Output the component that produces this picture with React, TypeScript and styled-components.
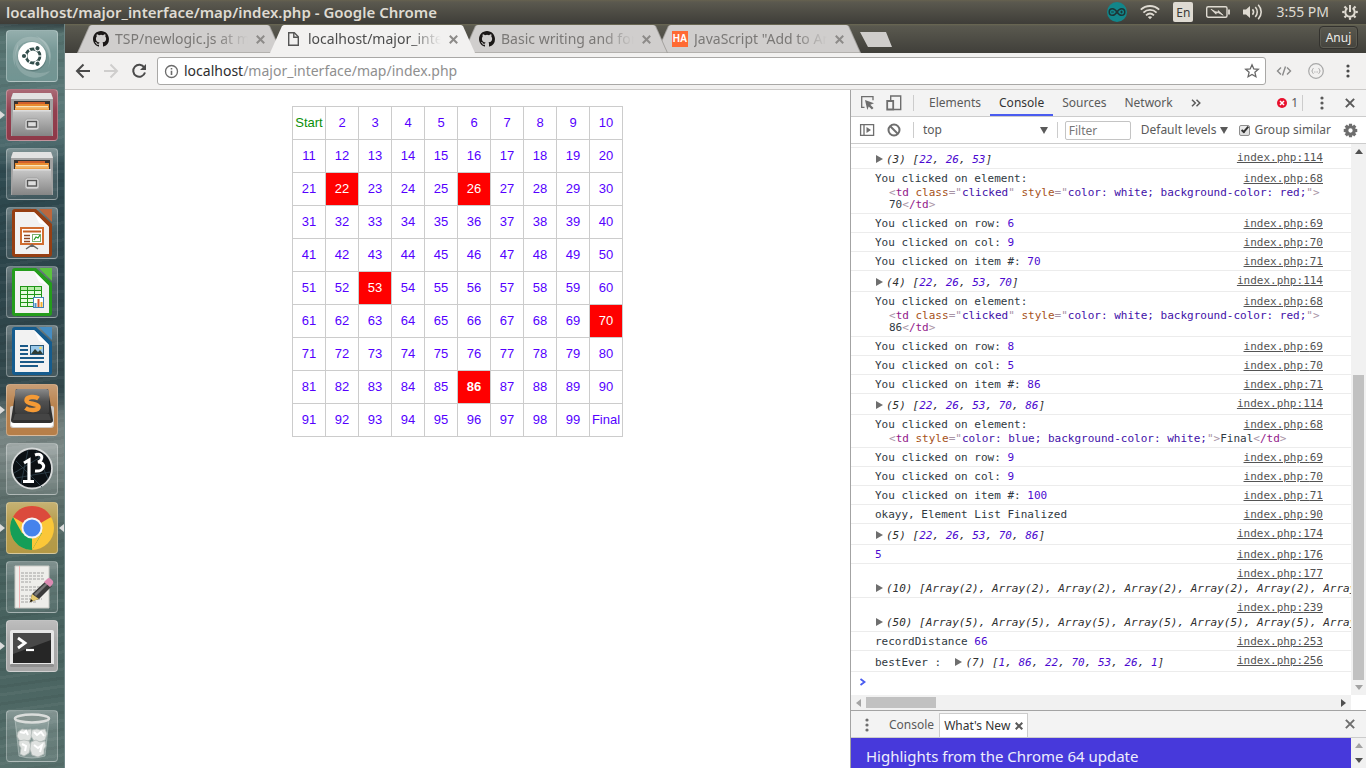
import React from "react";
import styled, { createGlobalStyle, css } from "styled-components";

const UI = `"Noto Sans", "Open Sans", sans-serif`;
const MONO = `"DejaVu Sans Mono", "Liberation Mono", monospace`;
const ARIAL = `"Liberation Sans", Arial, sans-serif`;

const Global = createGlobalStyle`
  *, *::before, *::after { box-sizing: border-box; }
  body { margin: 0; background: #fff; font-family: ${UI}; }
  button, input, select { font: inherit; color: inherit; margin: 0; padding: 0; border: 0; background: none; }
  svg { display: block; flex: none; }
`;

/* ---------- desktop ---------- */

const Desktop = styled.div`
  height: 100vh;
  display: flex;
  flex-direction: column;
  overflow: hidden;
`;

const TopPanel = styled.header`
  flex: none;
  height: 24px;
  display: flex;
  align-items: center;
  justify-content: space-between;
  padding: 0 8px 0 6px;
  color: #dfdbd2;
  background: linear-gradient(#66624f 0, #5b594f 2px, #3e3d38 100%);
`;

const WindowTitle = styled.h1`
  margin: 0;
  font-size: 15px;
  line-height: 22px;
  font-weight: 600;
`;

const Indicators = styled.div`
  display: flex;
  align-items: center;
  gap: 13px;
  font-size: 14px;
  line-height: 22px;
`;

const LanguageBadge = styled.span`
  width: 20px;
  height: 20px;
  border-radius: 2px;
  background: #dfdbd2;
  color: #3c3b37;
  font-size: 12px;
  line-height: 21px;
  text-align: center;
`;

const Workspace = styled.div`
  flex: 1;
  min-height: 0;
  display: flex;
`;

const Launcher = styled.nav`
  flex: none;
  width: 65px;
  display: flex;
  flex-direction: column;
  gap: 7px;
  padding: 6px 7px 6px 6px;
  border-right: 1px solid #6f8787;
  background:
    repeating-linear-gradient(172deg, rgba(255, 255, 255, 0.04) 0 3px, transparent 3px 9px, rgba(0, 0, 0, 0.05) 9px 12px, transparent 12px 17px),
    linear-gradient(#38484a 0, #55726f 10px, #5a7878 90px, #4b686b 122px, #2f4a50 145px, #2c444a 250px, #34494d 370px, #6f7d7b 395px, #7b8886 430px, #5f706d 470px, #46605d 540px, #4a6461 650px, #57706c 100%);
`;

const Tile = styled.button<{ $tone?: string; $last?: boolean }>`
  position: relative;
  flex: none;
  width: 52px;
  height: 52px;
  border-radius: 4px;
  border: 1px solid rgba(255, 255, 255, 0.3);
  background:
    linear-gradient(rgba(255, 255, 255, 0.26), rgba(255, 255, 255, 0.06) 40%, rgba(255, 255, 255, 0.02)),
    ${(p) => p.$tone ?? "rgba(255, 255, 255, 0.08)"};
  ${(p) => p.$last && css`margin-top: auto;`}
  svg { margin: -1px; }
`;

const Pip = styled.span<{ $side: "left" | "right" }>`
  position: absolute;
  top: 21px;
  ${(p) => p.$side}: -7px;
  border: 4px solid transparent;
  border-${(p) => p.$side}: 5px solid #dcdcdc;
  border-${(p) => (p.$side === "left" ? "right" : "left")}: 0;
`;

/* ---------- browser frame ---------- */

const Browser = styled.div`
  flex: 1;
  min-width: 0;
  display: flex;
  flex-direction: column;
`;

const TabStrip = styled.div`
  flex: none;
  height: 29px;
  display: flex;
  align-items: flex-end;
  padding: 0 8px 0 12px;
  background: linear-gradient(#6b6852 0, #5a594f 2px, #403f3a 100%);
`;

const TabBox = styled.div<{ $active?: boolean; $level: number }>`
  position: relative;
  z-index: ${(p) => p.$level};
  width: 205px;
  height: 28px;
  margin-right: -12px;
  padding: 0 14px 0 16px;
  display: flex;
  align-items: center;
  color: ${(p) => (p.$active ? "#4c4c4c" : "#7a7876")};
  &::before, &::after {
    content: "";
    position: absolute;
    z-index: -1;
    inset: 0;
    clip-path: polygon(0 100%, 12px 1px, 14px 0, 191px 0, 193px 1px, 100% 100%);
    background: ${(p) => (p.$active ? "#f2f1f0" : "#a3a19e")};
  }
  &::after {
    inset: 0 1px;
    clip-path: polygon(0 100%, 12px 1px, 14px 0, 189px 0, 191px 1px, 100% 100%);
    background: ${(p) => (p.$active ? "#f2f1f0" : "linear-gradient(#d0cecd 27px, #b3b1ae 27px)")};
  }
`;

const TabIcon = styled.span`
  width: 22px;
  flex: none;
`;

const TabLabel = styled.button`
  flex: 1;
  min-width: 0;
  overflow: hidden;
  white-space: nowrap;
  text-align: left;
  font-size: 14px;
  line-height: 22px;
  mask-image: linear-gradient(90deg, #000 74%, transparent 97%);
`;

const IconButton = styled.button<{ $w?: number }>`
  width: ${(p) => p.$w ?? 16}px;
  flex: none;
  display: flex;
  align-items: center;
  justify-content: center;
`;

const NewTab = styled.button`
  width: 32px;
  height: 15px;
  margin: 0 0 6px 11px;
  background: #cfcdcb;
  clip-path: polygon(0 0, 26px 0, 100% 100%, 8px 100%);
`;

const ProfileButton = styled.button`
  align-self: flex-start;
  margin: 2px 0 0 auto;
  width: 39px;
  height: 23px;
  border: 1px solid #33322e;
  border-radius: 4px;
  color: #eeece8;
  font-size: 12px;
  line-height: 20px;
  box-shadow: inset 0 0 0 1px #5d5c53;
`;

const AddressRow = styled.div`
  flex: none;
  height: 37px;
  display: flex;
  align-items: center;
  padding: 0 10px;
  background: #f2f1f0;
  border-bottom: 1px solid #cbc9c7;
`;

const NavGroup = styled.div`
  display: flex;
  gap: 12px;
  width: 82px;
`;

const Omnibox = styled.div`
  flex: 1;
  height: 28px;
  display: flex;
  align-items: center;
  padding: 0 5px 0 6px;
  gap: 5px;
  background: #fff;
  border: 1px solid #a9a8a6;
  border-radius: 3px;
`;

const Address = styled.a`
  flex: 1;
  font-size: 14px;
  line-height: 22px;
  color: #8f8f8f;
  text-decoration: none;
  b { font-weight: 400; color: #2e2e2e; }
`;

const Extensions = styled.div`
  display: flex;
  gap: 16px;
  padding-left: 10px;
`;

const Content = styled.div`
  flex: 1;
  min-height: 0;
  display: flex;
`;

/* ---------- web page ---------- */

const Page = styled.main`
  flex: 1;
  min-width: 0;
  padding-top: 16px;
  overflow: hidden;
`;

const Grid = styled.table`
  margin: 0 auto;
  border-collapse: collapse;
  table-layout: fixed;
  width: 331px;
  font: 13px/15px ${ARIAL};
  text-align: center;
`;

const Cell = styled.td<{ $hit?: boolean; $bold?: boolean; $start?: boolean }>`
  height: 33px;
  padding: 0 0 2px;
  border: 1px solid #ccc;
  white-space: nowrap;
  color: ${(p) => (p.$hit ? "#fff" : p.$start ? "#0a8f0a" : "#5500ff")};
  background: ${(p) => (p.$hit ? "#f00" : "#fff")};
  font-weight: ${(p) => (p.$bold ? 700 : 400)};
`;

/* ---------- developer tools ---------- */

const DevTools = styled.aside`
  flex: none;
  width: 516px;
  display: flex;
  flex-direction: column;
  border-left: 1px solid #a3a3a3;
  color: #5a5a5a;
  font-size: 12px;
  line-height: 16px;
  background: #fff;
`;

const Bar = styled.div<{ $plain?: boolean }>`
  flex: none;
  height: 27px;
  display: flex;
  align-items: center;
  background: ${(p) => (p.$plain ? "#fff" : "#f3f3f3")};
  border-bottom: 1px solid #ccc;
`;

const Divider = styled.span`
  width: 1px;
  height: 16px;
  flex: none;
  background: #ccc;
`;

const IconPair = styled.div`
  display: flex;
  align-items: center;
  gap: 11px;
  width: 62px;
  padding-left: 8px;
`;

const PanelTabs = styled.div`
  flex: 1;
  display: flex;
  align-items: stretch;
  height: 26px;
  padding-left: 6px;
`;

const PanelTab = styled.button<{ $on?: boolean }>`
  padding: 0 9px;
  color: ${(p) => (p.$on ? "#333" : "#5a5a5a")};
  box-shadow: ${(p) => (p.$on ? "inset 0 -2px #4a5cf0" : "none")};
`;

const ErrorCount = styled.button`
  display: flex;
  align-items: center;
  gap: 4px;
  padding-right: 4px;
`;

const EndGroup = styled.div`
  display: flex;
  align-items: center;
  gap: 12px;
  padding: 0 8px 0 11px;
`;

const ContextPicker = styled.label`
  flex: 1;
  display: flex;
  align-items: center;
  padding: 0 9px;
  select { flex: 1; appearance: none; outline: 0; }
`;

const FilterInput = styled.input`
  width: 66px;
  height: 19px;
  margin: 0 10px 0 7px;
  padding: 0 3px;
  border: 1px solid #c4c4c4;
  border-radius: 2px;
  background: #fff;
  &::placeholder { color: #777; opacity: 1; }
`;

const LevelButton = styled.button`
  display: flex;
  align-items: center;
  gap: 4px;
  white-space: nowrap;
`;

const SimilarLabel = styled.label`
  display: flex;
  align-items: center;
  gap: 4px;
  padding: 0 3px 0 11px;
  white-space: nowrap;
`;

const Tick = styled.input`
  appearance: none;
  width: 11px;
  height: 11px;
  border: 1px solid #8e8e8e;
  border-radius: 2px;
  background: linear-gradient(#eee, #dcdcdc);
  &:checked::before {
    content: "";
    display: block;
    width: 4px;
    height: 8px;
    margin: -1px 0 0 3px;
    border: solid #333;
    border-width: 0 2px 2px 0;
    transform: rotate(40deg);
  }
`;

const ConsoleArea = styled.div`
  flex: 1;
  min-height: 0;
  display: flex;
`;

const Log = styled.div`
  flex: 1;
  min-width: 0;
  overflow: hidden;
  padding-top: 3px;
  font: 11px/14px ${MONO};
  color: #303942;
`;

const Row = styled.div<{ $stacked?: boolean }>`
  display: flex;
  flex-direction: ${(p) => (p.$stacked ? "column-reverse" : "row")};
  gap: ${(p) => (p.$stacked ? 1 : 0)}px;
  justify-content: space-between;
  align-items: flex-start;
  padding: 3px 28px 1px 24px;
  border-top: 1px solid #ececec;
  white-space: pre;
`;

const Source = styled.a<{ $stacked?: boolean }>`
  color: #545454;
  text-decoration: underline;
  flex: none;
  ${(p) => p.$stacked && css`align-self: flex-end;`}
`;

const Message = styled.div<{ $object?: boolean }>`
  flex: 1;
  width: 0;
  padding-top: ${(p) => (p.$object ? 2 : 0)}px;
`;

const Overflowing = styled.div`
  flex: none;
`;

const Num = styled.span`
  color: #4c0ad0;
`;

const Obj = styled.i`
  color: #303030;
`;

const Expander = styled.button`
  width: 11px;
  height: 10px;
  padding-left: 1px;
  vertical-align: -1px;
  display: inline-block;
`;

const Markup = styled.div`
  padding: 1px 0 1px 14px;
  line-height: 12px;
`;
const Punct = styled.span`color: #a894a6;`;
const TagName = styled.span`color: #92188a;`;
const AttrName = styled.span`color: #a6521a;`;
const AttrValue = styled.span`color: #4210a8;`;

const Prompt = styled.div`
  border-top: 1px solid #ececec;
  padding: 6px 8px;
`;

const VScroll = styled.div`
  flex: none;
  width: 15px;
  display: flex;
  flex-direction: column;
  align-items: center;
  justify-content: space-between;
  padding: 5px 0;
  background: #f1f1f1;
`;

const VTrack = styled.div`
  flex: 1;
  width: 11px;
  display: flex;
  flex-direction: column;
  justify-content: flex-end;
  padding: 0 0 5px;
`;

const VThumb = styled.div`
  height: 58%;
  background: #c1c1c1;
`;

const HScroll = styled.div`
  flex: none;
  height: 15px;
  margin-right: 15px;
  display: flex;
  align-items: center;
  justify-content: space-between;
  padding: 0 5px;
  background: #f1f1f1;
`;

const HTrack = styled.div`
  flex: 1;
  padding: 0 4px 0 5px;
`;

const HThumb = styled.div`
  width: 70px;
  height: 11px;
  background: #c1c1c1;
`;

const Drawer = styled.section`
  flex: none;
  border-top: 1px solid #a3a3a3;
`;

const DrawerTabs = styled.div`
  flex: 1;
  height: 26px;
  display: flex;
  align-items: flex-end;
`;

const DrawerMenu = styled.div`
  width: 33px;
  height: 24px;
  padding-left: 8px;
  display: flex;
  align-items: center;
`;

const DrawerTab = styled.div<{ $on?: boolean }>`
  display: flex;
  align-items: center;
  gap: 5px;
  height: 24px;
  padding: 0 5px;
  color: ${(p) => (p.$on ? "#333" : "#5a5a5a")};
  ${(p) => p.$on && css`
    padding: 0 4px;
    background: #fff;
    border: 1px solid #ccc;
    border-bottom: 0;
  `}
`;

const NewsRow = styled.div`
  display: flex;
  height: 30px;
`;

const News = styled.h2`
  flex: 1;
  margin: 0;
  padding: 6px 15px 0;
  background: #4739db;
  color: #eeeefc;
  font-size: 15px;
  line-height: 24px;
  font-weight: 400;
`;

/* ---------- small glyphs ---------- */

const Tri = ({ d, c = "#505050" }: { d: "up" | "down" | "left" | "right"; c?: string }) => {
  const pts = { up: "0,5 4,0 8,5", down: "0,0 8,0 4,5", left: "5,0 0,4 5,8", right: "0,0 5,4 0,8" }[d];
  const flat = d === "up" || d === "down";
  return (
    <svg width={flat ? 8 : 5} height={flat ? 5 : 8}>
      <polygon points={pts} fill={c} />
    </svg>
  );
};

const Caret = () => (
  <svg width="8" height="7"><path d="M0 0h8L4 7z" fill="#5a5a5a" /></svg>
);

const Cross = ({ s = 8, w = 2, c = "#8d8b89" }: { s?: number; w?: number; c?: string }) => (
  <svg width={s} height={s} viewBox="0 0 8 8">
    <path d="M.7.7l6.6 6.6M7.3.7L.7 7.3" stroke={c} strokeWidth={(w * 8) / s} />
  </svg>
);

const Dots = ({ c = "#5a5a5a" }: { c?: string }) => (
  <svg width="4" height="14" fill={c}>
    <circle cx="2" cy="2" r="1.6" /><circle cx="2" cy="7" r="1.6" /><circle cx="2" cy="12" r="1.6" />
  </svg>
);

const GitHub = () => (
  <svg width="16" height="16" viewBox="0 0 16 16" fill="#1b1817">
    <path d="M8 0C3.58 0 0 3.58 0 8c0 3.54 2.29 6.53 5.47 7.59.4.07.55-.17.55-.38 0-.19-.01-.82-.01-1.49-2.01.37-2.53-.49-2.69-.94-.09-.23-.48-.94-.82-1.13-.28-.15-.68-.52-.01-.53.63-.01 1.08.58 1.23.82.72 1.21 1.87.87 2.33.66.07-.52.28-.87.51-1.07-1.78-.2-3.64-.89-3.64-3.95 0-.87.31-1.59.82-2.15-.08-.2-.36-1.02.08-2.12 0 0 .67-.21 2.2.82a7.6 7.6 0 0 1 4 0c1.53-1.04 2.2-.82 2.2-.82.44 1.1.16 1.92.08 2.12.51.56.82 1.27.82 2.15 0 3.07-1.87 3.75-3.65 3.95.29.25.54.73.54 1.48 0 1.07-.01 1.93-.01 2.2 0 .21.15.46.55.38A8.01 8.01 0 0 0 16 8c0-4.42-3.58-8-8-8z" />
  </svg>
);

const PageIcon = () => (
  <svg width="16" height="16" fill="none" stroke="#555" strokeWidth="1.400">
    <path d="M2.700 1.700h5.600l4 4v8.600H2.700z" /><path d="M7.800 2v4.200h4.200" />
  </svg>
);

const HaBadge = styled.span`
  display: block;
  width: 16px;
  height: 16px;
  background: #ff6a33;
  color: #fff;
  font: 700 10px/16px ${ARIAL};
  text-align: center;
`;

const Gear = ({ c, s = 16 }: { c: string; s?: number }) => (
  <svg width={s} height={s} viewBox="0 0 16 16">
    <circle cx="8" cy="8" r="4" fill="none" stroke={c} strokeWidth="3.400" />
    {[0, 45, 90, 135, 180, 225, 270, 315].map((a) => (
      <rect key={a} x="6.300" y="0.800" width="3.400" height="3.400" fill={c} transform={`rotate(${a} 8 8)`} />
    ))}
  </svg>
);

const SessionGear = () => (
  <svg width="16" height="16" viewBox="0 0 16 16" fill="none" stroke="#dfdbd2">
    <path d="M5.400 4.200a4.700 4.700 0 1 0 5.200 0" strokeWidth="2" />
    <path d="M8 1v7" strokeWidth="2" />
    {[45, 90, 135, 180, 225, 270, 315].map((a) => (
      <path key={a} d="M8 0.200v2.400" strokeWidth="2.200" transform={`rotate(${a} 8 8)`} />
    ))}
  </svg>
);

const Arduino = () => (
  <svg width="20" height="22" viewBox="0 0 20 22">
    <circle cx="10" cy="11" r="10" fill="#12868a" />
    <g fill="none" stroke="#1d3536" strokeWidth="1.500">
      <path d="M10 11C8.400 8.600 7.200 7.700 5.500 7.700a3.300 3.300 0 0 0 0 6.600c1.700 0 2.900-.9 4.500-3.300s2.800-3.300 4.500-3.300a3.300 3.300 0 0 1 0 6.600c-1.700 0-2.900-.9-4.500-3.300z" />
      <path d="M4.200 11h2.600M13.200 11h2.600M14.500 9.700v2.600" strokeWidth="1" />
    </g>
  </svg>
);

const Wifi = () => (
  <svg width="20" height="16" fill="none" stroke="#dfdbd2" strokeWidth="1.800">
    <path d="M.8 5.600C6 .8 14 .8 19.200 5.600M3.400 8.600c3.800-3.600 9.400-3.600 13.200 0M6 11.400c2.400-2.200 5.600-2.200 8 0" />
    <path d="M7.800 13c1.400-1 3-1 4.400 0L10 15.300z" fill="#dfdbd2" stroke="none" />
  </svg>
);

const Battery = () => (
  <svg width="24" height="14" fill="none" stroke="#dfdbd2">
    <rect x=".7" y="1.700" width="20.300" height="10.600" rx="1.500" strokeWidth="1.400" />
    <path d="M23 4.500v5" strokeWidth="1.800" />
    <path d="M5 4.200L11.800 8l.4-2.400 5 4.600L10.600 6.800l-.6 2.400z" fill="#dfdbd2" stroke="#dfdbd2" strokeWidth=".8" />
  </svg>
);

const Sound = () => (
  <svg width="20" height="18" fill="none" stroke="#dfdbd2" strokeWidth="1.600">
    <path d="M0 6.500h3L7 3v12l-4-3.500H0z" fill="#dfdbd2" stroke="none" />
    <path d="M9.500 6.300c1.300 1.600 1.300 3.800 0 5.400M12.300 4c2.600 2.900 2.600 7.100 0 10M15.200 1.800c4 4.300 4 10.100 0 14.400" />
  </svg>
);

/* ---------- launcher artwork ---------- */

const art = { width: 52, height: 52, viewBox: "0 0 52 52" };

const UbuntuArt = () => (
  <svg {...art}>
    <g fill="#fff" fillOpacity=".16">
      <path d="M10 38C2 22 10 5 27 7c14 1 20 12 17 24C42 20 36 12 26 11 14 10 6 22 10 38z" />
      <path d="M12 14C6 26 8 42 24 47c8 2 16-1 20-6-10 4-20 2-26-6-4-6-6-13-6-21z" />
      <path d="M30 6c12 4 19 18 12 32 4-12 0-24-12-32z" />
    </g>
    <circle cx="26" cy="27" r="14.500" fill="#3a5555" opacity=".35" />
    <circle cx="26" cy="26" r="14" fill="#fff" />
    <circle cx="27" cy="26" r="7" fill="none" stroke="#334e4c" strokeWidth="2.800" />
    {[60, 180, 300].map((a) => (
      <g key={a} transform={`rotate(${a} 27 26)`}>
        <circle cx="36" cy="26" r="3.200" fill="#fff" /><circle cx="36" cy="26" r="2.100" fill="#334e4c" />
      </g>
    ))}
    {[0, 120, 240].map((a) => (
      <path key={a} d="M32 26h4" stroke="#fff" strokeWidth="1.200" transform={`rotate(${a} 27 26)`} />
    ))}
  </svg>
);

const FilesArt = () => (
  <svg {...art}>
    <defs>
      <linearGradient id="cab" x2="0" y2="1"><stop stopColor="#c9c9c9" /><stop offset="1" stopColor="#858585" /></linearGradient>
    </defs>
    <path d="M7 4h38l2 5v38H5V9z" fill="#a2a2a2" />
    <path d="M7 4h38l2 6H5z" fill="#e2e2e2" />
    <path d="M8 12h36v12H8z" fill="#373230" />
    <path d="M12 13h27v3H12z" fill="#d0602c" /><path d="M9 15h34v7H9z" fill="#e98b2f" />
    <path d="M10 17h32v1.500H10z" fill="#f8e6bb" /><path d="M9 19h34v1.500H9z" fill="#f5b560" />
    <path d="M7 21h38l1 26H6z" fill="url(#cab)" /><path d="M7 21h38v1.500H7z" fill="#ddd" />
    <rect x="19" y="30" width="14" height="11" rx="2.500" fill="#d8d8d8" stroke="#999" strokeWidth=".7" />
    <rect x="21.500" y="32.500" width="9" height="5.500" fill="#ddd" stroke="#555" strokeWidth="1.400" />
  </svg>
);

const OfficePage = ({ c, l, children }: { c: string; l: string; children: React.ReactNode }) => (
  <svg {...art}>
    <path d="M9 2h21l16 15v30q0 3-3 3H9q-3 0-3-3V5q0-3 3-3z" fill={c} />
    <path d="M33 2h13v13z" fill={l} />
    <path d="M9 5h19l15 15v27H9z" fill="#f2f2f2" />
    <path d="M28 5l15 15-10-4z" fill="#fff" />
    {children}
  </svg>
);

const ImpressArt = () => (
  <OfficePage c="#963f13" l="#bd673c">
    <rect x="15" y="21" width="22" height="16" fill="#fff" stroke="#d06d30" strokeWidth="2" />
    <path d="M17 24.500h18" stroke="#c36025" strokeWidth="2" />
    <path d="M18 28.500h6m-6 3h6m-6 3h6" stroke="#8e4724" strokeWidth="1.600" />
    <rect x="26.500" y="27.500" width="8" height="7" fill="#fff" stroke="#7caf6e" />
    <path d="M28 33l2-3 2 1 2-3" fill="none" stroke="#279e25" strokeWidth="1.300" />
    <path d="M20 42l6-4 6 4M26 37v3" fill="none" stroke="#666" strokeWidth="1.500" />
  </OfficePage>
);

const CalcArt = () => (
  <OfficePage c="#249c1c" l="#5bc33f">
    <rect x="14" y="20" width="22" height="21" fill="#209618" />
    {[0, 1, 2, 3, 4].map((r) => [0, 1, 2].map((k) => (
      <rect key={`${r}${k}`} x={15 + k * 7} y={21 + r * 4} width="6" height="3" fill={r === 0 ? "#b8eda9" : "#e7fbe0"} />
    )))}
    <rect x="27.500" y="31.500" width="10" height="10" fill="#fff" stroke="#4381b4" />
    <path d="M29.500 41v-4" stroke="#4d91c8" strokeWidth="2" /><path d="M32.500 41v-8" stroke="#d85727" strokeWidth="2" /><path d="M35.500 41v-5" stroke="#f2b02e" strokeWidth="2" />
  </OfficePage>
);

const WriterArt = () => (
  <OfficePage c="#155c8e" l="#468dc2">
    <path d="M14 21h8m-8 4h8m-8 4h8m-8 4h24m-24 4h24m-24 4h18" stroke="#1b5a88" strokeWidth="1.800" />
    <rect x="24.500" y="20.500" width="13" height="9" fill="#9ac9ea" stroke="#28597c" />
    <path d="M25 29l4-5 3 3 2-2 3 4z" fill="#303c34" /><circle cx="34.500" cy="23" r="1.300" fill="#f8d65d" />
  </OfficePage>
);

const SublimeArt = () => (
  <svg {...art}>
    <defs><linearGradient id="key" x2="0" y2="1"><stop stopColor="#8a8a8a" /><stop offset=".5" stopColor="#505050" /><stop offset="1" stopColor="#3c3c3c" /></linearGradient></defs>
    <path d="M6 22h40q2 0 2 2v17q0 3-3 3H7q-3 0-3-3V24q0-2 2-2z" fill="#cfcac5" />
    <path d="M5 38h42v2q0 3-3 3H8q-3 0-3-3z" fill="#fff" />
    <path d="M10 5h32l5 31q0 3-3 3H8q-3 0-3-3z" fill="#303030" />
    <path d="M12 5h28q3 0 3 3v19q0 3-3 3H12q-3 0-3-3V8q0-3 3-3z" fill="url(#key)" />
    <path d="M9 30h34l2 6H7z" fill="#454545" />
    <path d="M32.500 14.500c-3.500-2.500-12-2-12 2 0 4 12 2.500 12 6.500 0 3.500-9 4-13 1" fill="none" stroke="#f59a35" strokeWidth="4.500" />
  </svg>
);

const ProcessingArt = () => (
  <svg {...art}>
    <circle cx="26" cy="25.500" r="20" fill="#0b1014" stroke="#d7dada" strokeWidth="1.800" />
    <path d="M10 18l26 26M8 30l30-18M15 41l7-34M10 35l34-6M30 8l12 28" stroke="#31444f" strokeWidth=".8" />
    <path d="M18 20l5-3v20M17 38.500h11" stroke="#fff" strokeWidth="3.200" fill="none" />
    <path d="M29 12c8-3 9 5 3 7 8 0 8 10-3 9" stroke="#fff" strokeWidth="3" fill="none" />
  </svg>
);

const ChromeArt = () => (
  <svg {...art}>
    <circle cx="26" cy="26" r="22" fill="#fbc738" />
    <path d="M26 26L6.900 15A22 22 0 0 1 45.100 15z" fill="#db4a3c" />
    <path d="M7 15a22 22 0 0 0 19 33l10-17-10 4-10-4z" fill="#159e58" />
    <path d="M26 48l9.500-16.500L26 36z" fill="#fbc738" />
    <circle cx="26" cy="26" r="10.500" fill="#f5f5f5" /><circle cx="26" cy="26" r="8.600" fill="#4583ec" />
  </svg>
);

const EditorArt = () => (
  <svg {...art}>
    <path d="M9 5h34v42H9z" fill="#eeeeea" stroke="#c9cac5" />
    <path d="M13.500 5v42" stroke="#f1b5b5" />
    <path d="M15 12h24m-24 3h22m-22 3h24m-24 3h10m-10 5h24m-24 3h20m-20 6h18m-18 3h21m-21 3h15" stroke="#999" strokeWidth=".9" strokeDasharray="3 1" />
    <path d="M24 41l2-8L40 20l6 5-13 13z" fill="#3b3b3b" /><path d="M28 33L41 21l2 1-13 13z" fill="#777" />
    <path d="M24 41l2-8 7 5z" fill="#e5c96e" /><path d="M24 41l1-3 2 2z" fill="#111" />
    <path d="M38 21l3-3q2-2 4 0l2 2q1 2-1 4l-2 2z" fill="#dd8bb3" />
  </svg>
);

const TerminalArt = () => (
  <svg {...art}>
    <rect x="4" y="10" width="44" height="37" rx="2" fill="#e7e7e7" />
    <rect x="4" y="44" width="44" height="3" rx="1" fill="#8f8f8f" />
    <rect x="7" y="13" width="38" height="30" fill="#262626" /><path d="M7 13h38v7L7 34z" fill="#484848" />
    <path d="M12 18l7 5-7 5" fill="none" stroke="#fff" strokeWidth="2.800" /><path d="M20 30h8" stroke="#fff" strokeWidth="2.200" />
  </svg>
);

const TrashArt = () => (
  <svg {...art}>
    <path d="M9 9l4 37q13 4 26 0l4-37z" fill="#c3cfcd" fillOpacity=".3" stroke="#d4dddb" strokeOpacity=".45" />
    <g fill="#dfe2e0" stroke="#b3bab7" strokeWidth=".8">
      <path d="M12 22l4-3 5 1 4-1 1 6-2 5-5 2-6-2-2-4z" />
      <path d="M26 20l5-1 3 1 5-1 2 5-2 6-5 2-6-1-3-5z" />
      <path d="M13 31l5-1 5 1 2 5-2 7-5 3-4-2 1-6-2-3z" />
      <path d="M25 32l5-2 4 2 5-1 1 5-2 3v5l-6 3-6-2-2-6z" />
    </g>
    <path d="M14 22l4 1 2-2 2 4M28 22l3 3 4-3 3 4M16 34l4 2-1 5M28 35l4 3 4-3-2 7" fill="none" stroke="#fff" strokeWidth="2" />
    <ellipse cx="26" cy="8.500" rx="17" ry="4" fill="#84938f" stroke="#dadddb" strokeWidth="2.600" />
  </svg>
);

type LauncherApp = { name: string; art: React.ReactNode; tone?: string; left?: boolean; right?: boolean; last?: boolean };
const apps: LauncherApp[] = [
  { name: "Search your computer", art: <UbuntuArt />, tone: "#6f9290" },
  { name: "Files", art: <FilesArt />, tone: "#8c3545", left: true },
  { name: "Files 2", art: <FilesArt /> },
  { name: "LibreOffice Impress", art: <ImpressArt /> },
  { name: "LibreOffice Calc", art: <CalcArt /> },
  { name: "LibreOffice Writer", art: <WriterArt /> },
  { name: "Sublime Text", art: <SublimeArt />, tone: "#b57c45", left: true },
  { name: "Processing", art: <ProcessingArt /> },
  { name: "Google Chrome", art: <ChromeArt />, tone: "#b29742", left: true, right: true },
  { name: "Text Editor", art: <EditorArt /> },
  { name: "Terminal", art: <TerminalArt />, tone: "#a6a6a6", left: true },
  { name: "Trash", art: <TrashArt />, last: true },
];

const tabs = [
  { label: "TSP/newlogic.js at master", icon: <GitHub />, level: 1 },
  { label: "localhost/major_interface", icon: <PageIcon />, level: 4, active: true },
  { label: "Basic writing and formatting", icon: <GitHub />, level: 3 },
  { label: "JavaScript \"Add to Array\"", icon: <HaBadge>HA</HaBadge>, level: 2 },
];

/* ---------- page grid ---------- */

const picked = [22, 26, 53, 70, 86];

const NumberGrid = () => (
  <Grid>
    <tbody>
      {Array.from({ length: 10 }, (_, r) => (
        <tr key={r}>
          {Array.from({ length: 10 }, (_, c) => {
            const n = r * 10 + c + 1;
            return (
              <Cell key={n} $hit={picked.includes(n)} $bold={n === 86} $start={n === 1}>
                {n === 1 ? "Start" : n === 100 ? "Final" : n}
              </Cell>
            );
          })}
        </tr>
      ))}
    </tbody>
  </Grid>
);

/* ---------- console log ---------- */

const ArrayPreview = ({ items, count = items.length }: { items: (number | string)[]; count?: number }) => (
  <>
    <Expander aria-label="Expand">
      <svg width="8" height="8"><path d="M0 0l7 4-7 4z" fill="#6e6e6e" /></svg>
    </Expander>
    <Obj>
      {`(${count}) [`}
      {items.map((v, i) => (
        <React.Fragment key={i}>
          {i > 0 && ", "}
          {typeof v === "number" ? <Num>{v}</Num> : v}
        </React.Fragment>
      ))}
      ]
    </Obj>
  </>
);

const Attr = ({ name, value }: { name: string; value: string }) => (
  <>
    {" "}<AttrName>{name}</AttrName><Punct>="</Punct><AttrValue>{value}</AttrValue><Punct>"</Punct>
  </>
);

const CloseTd = () => (
  <><Punct>&lt;</Punct><TagName>/td</TagName><Punct>&gt;</Punct></>
);

const ClickedCell = ({ n }: { n: number }) => (
  <>
    You clicked on element:
    <Markup>
      <Punct>&lt;</Punct><TagName>td</TagName>
      <Attr name="class" value="clicked" />
      <Attr name="style" value="color: white; background-color: red;" />
      <Punct>&gt;</Punct>
      <br />
      {n}<CloseTd />
    </Markup>
  </>
);

const FinalCell = () => (
  <>
    You clicked on element:
    <Markup>
      <Punct>&lt;</Punct><TagName>td</TagName>
      <Attr name="style" value="color: blue; background-color: white;" />
      <Punct>&gt;</Punct>Final<CloseTd />
    </Markup>
  </>
);

const valueLine = (text: string, n: number) => <>{text} <Num>{n}</Num></>;

type Entry = { line: number; body: React.ReactNode; object?: boolean; stacked?: boolean };
const entries: Entry[] = [
  { line: 114, object: true, body: <ArrayPreview items={[22, 26, 53]} /> },
  { line: 68, body: <ClickedCell n={70} /> },
  { line: 69, body: valueLine("You clicked on row:", 6) },
  { line: 70, body: valueLine("You clicked on col:", 9) },
  { line: 71, body: valueLine("You clicked on item #:", 70) },
  { line: 114, object: true, body: <ArrayPreview items={[22, 26, 53, 70]} /> },
  { line: 68, body: <ClickedCell n={86} /> },
  { line: 69, body: valueLine("You clicked on row:", 8) },
  { line: 70, body: valueLine("You clicked on col:", 5) },
  { line: 71, body: valueLine("You clicked on item #:", 86) },
  { line: 114, object: true, body: <ArrayPreview items={[22, 26, 53, 70, 86]} /> },
  { line: 68, body: <FinalCell /> },
  { line: 69, body: valueLine("You clicked on row:", 9) },
  { line: 70, body: valueLine("You clicked on col:", 9) },
  { line: 71, body: valueLine("You clicked on item #:", 100) },
  { line: 90, body: "okayy, Element List Finalized" },
  { line: 174, object: true, body: <ArrayPreview items={[22, 26, 53, 70, 86]} /> },
  { line: 176, body: <Num>5</Num> },
  { line: 177, stacked: true, body: <ArrayPreview count={10} items={Array(10).fill("Array(2)")} /> },
  { line: 239, stacked: true, body: <ArrayPreview count={50} items={Array(10).fill("Array(5)")} /> },
  { line: 253, body: valueLine("recordDistance", 66) },
  { line: 256, object: true, body: <>{"bestEver :  "}<ArrayPreview items={[1, 86, 22, 70, 53, 26, 1]} /></> },
];

const ConsoleLog = () => (
  <Log>
    {entries.map((e, i) => (
      <Row key={i} $stacked={e.stacked}>
        {e.stacked ? <Overflowing>{e.body}</Overflowing> : <Message $object={e.object}>{e.body}</Message>}
        <Source href="#" $stacked={e.stacked}>index.php:{e.line}</Source>
      </Row>
    ))}
    <Prompt>
      <svg width="8" height="8" fill="none" stroke="#4a5cf0" strokeWidth="1.800"><path d="M1.500 1l4 3-4 3" /></svg>
    </Prompt>
  </Log>
);

export default function App() {
  return (
    <Desktop>
      <Global />
      <TopPanel>
        <WindowTitle>localhost/major_interface/map/index.php - Google Chrome</WindowTitle>
        <Indicators>
          <Arduino />
          <Wifi />
          <LanguageBadge>En</LanguageBadge>
          <Battery />
          <Sound />
          <time>3:55 PM</time>
          <SessionGear />
        </Indicators>
      </TopPanel>
      <Workspace>
        <Launcher>
          {apps.map((a) => (
            <Tile key={a.name} aria-label={a.name} $tone={a.tone} $last={a.last}>
              {a.art}
              {a.left && <Pip $side="left" />}
              {a.right && <Pip $side="right" />}
            </Tile>
          ))}
        </Launcher>
        <Browser>
          <TabStrip>
            {tabs.map((t) => (
              <TabBox key={t.label} $active={t.active} $level={t.level}>
                <TabIcon>{t.icon}</TabIcon>
                <TabLabel>{t.label}</TabLabel>
                <IconButton aria-label="Close tab"><Cross s={9} /></IconButton>
              </TabBox>
            ))}
            <NewTab aria-label="New tab" />
            <ProfileButton>Anuj</ProfileButton>
          </TabStrip>
          <AddressRow>
            <NavGroup>
              <IconButton aria-label="Back">
                <svg width="16" height="16" fill="none" stroke="#4a4a4a" strokeWidth="2"><path d="M15 8H2.500M8.500 1.500L2 8l6.500 6.500" /></svg>
              </IconButton>
              <IconButton aria-label="Forward">
                <svg width="16" height="16" fill="none" stroke="#cfcecd" strokeWidth="2"><path d="M1 8h12.500M7.500 1.500L14 8l-6.500 6.500" /></svg>
              </IconButton>
              <IconButton aria-label="Reload">
                <svg width="16" height="16" fill="none" stroke="#4a4a4a" strokeWidth="2"><path d="M13.300 4.500A6 6 0 1 0 14 9.500" /><path d="M15 1v6H9z" fill="#4a4a4a" stroke="none" /></svg>
              </IconButton>
            </NavGroup>
            <Omnibox>
              <svg width="15" height="15" fill="none" stroke="#6b6b6b" strokeWidth="1.300"><circle cx="7.500" cy="7.500" r="6" /><path d="M7.500 6.700v4.300M7.500 4v1.500" strokeWidth="1.600" /></svg>
              <Address href="#"><b>localhost</b>/major_interface/map/index.php</Address>
              <IconButton aria-label="Bookmark">
                <svg width="16" height="16" fill="none" stroke="#666" strokeWidth="1.300"><path d="M8 1.800l1.800 4.100 4.500.4-3.400 3 1 4.400L8 11.400l-3.900 2.300 1-4.400-3.400-3 4.500-.4z" /></svg>
              </IconButton>
            </Omnibox>
            <Extensions>
              <IconButton aria-label="Source viewer">
                <svg width="16" height="12" fill="none" stroke="#8a8a8a" strokeWidth="1.400"><path d="M5 2.500L1.500 6 5 9.500M11 2.500L14.500 6 11 9.500M9.500 1.500l-3 9" /></svg>
              </IconButton>
              <IconButton aria-label="JSON viewer">
                <svg width="16" height="16" fill="none" stroke="#a8a8a8"><circle cx="8" cy="8" r="7.300" strokeWidth="1.200" /><path d="M5.500 5.500q-1 0-1 1.200T3.700 8q.8.200.8 1.300t1 1.200M10.500 5.500q1 0 1 1.200t.8 1.300q-.8.200-.8 1.300t-1 1.200M6.300 9h.8M7.700 9h.8M9.100 9h.8" /></svg>
              </IconButton>
              <IconButton aria-label="Menu"><Dots c="#4a4a4a" /></IconButton>
            </Extensions>
          </AddressRow>
          <Content>
            <Page><NumberGrid /></Page>
            <DevTools>
              <Bar>
                <IconPair>
                  <IconButton aria-label="Inspect element">
                    <svg width="16" height="16" fill="none" stroke="#6e6e6e" strokeWidth="1.300"><path d="M5.500 12.400H2.700V1.700H14v3.500" /><path d="M6 5l9 3.300-3.700 1.500 3.200 3.200-1.600 1.600-3.200-3.200L8.300 15z" fill="#6e6e6e" stroke="none" /></svg>
                  </IconButton>
                  <IconButton aria-label="Device toolbar">
                    <svg width="16" height="16" fill="none" stroke="#6e6e6e" strokeWidth="1.400"><path d="M4.700 5V1h10v13.500H8" /><path d="M1.200 6h6v8.500h-6z" strokeWidth="1.800" /></svg>
                  </IconButton>
                </IconPair>
                <Divider />
                <PanelTabs>
                  <PanelTab>Elements</PanelTab>
                  <PanelTab $on>Console</PanelTab>
                  <PanelTab>Sources</PanelTab>
                  <PanelTab>Network</PanelTab>
                  <PanelTab aria-label="More tabs">
                    <svg width="10" height="8" fill="none" stroke="#5a5a5a" strokeWidth="1.500"><path d="M1 .8L4.300 4 1 7.200M5.500 .8L8.800 4 5.500 7.200" /></svg>
                  </PanelTab>
                </PanelTabs>
                <ErrorCount>
                  <svg width="10" height="10"><circle cx="5" cy="5" r="5" fill="#e8112d" /><path d="M3 3l4 4M7 3L3 7" stroke="#fff" strokeWidth="1.500" /></svg>
                  1
                </ErrorCount>
                <Divider />
                <EndGroup>
                  <IconButton aria-label="Customize"><Dots /></IconButton>
                  <IconButton aria-label="Close DevTools"><Cross s={10} c="#5a5a5a" /></IconButton>
                </EndGroup>
              </Bar>
              <Bar $plain>
                <IconPair>
                  <IconButton aria-label="Console sidebar">
                    <svg width="16" height="14" fill="none" stroke="#6e6e6e" strokeWidth="1.300"><path d="M1.600 1.600h13v10.800h-13zM5 1.600v10.800" /><path d="M7.500 4l4.500 3-4.500 3z" fill="#6e6e6e" stroke="none" /></svg>
                  </IconButton>
                  <IconButton aria-label="Clear console">
                    <svg width="14" height="14" fill="none" stroke="#6e6e6e" strokeWidth="2"><circle cx="7" cy="7" r="5.500" /><path d="M3 3l8 8" /></svg>
                  </IconButton>
                </IconPair>
                <Divider />
                <ContextPicker>
                  <select aria-label="Context"><option>top</option></select>
                  <Caret />
                </ContextPicker>
                <Divider />
                <FilterInput placeholder="Filter" aria-label="Filter" />
                <LevelButton>Default levels <Caret /></LevelButton>
                <SimilarLabel><Tick type="checkbox" defaultChecked />Group similar</SimilarLabel>
                <IconButton $w={32} aria-label="Settings"><Gear c="#6e6e6e" s={15} /></IconButton>
              </Bar>
              <ConsoleArea>
                <ConsoleLog />
                <VScroll>
                  <Tri d="up" />
                  <VTrack><VThumb /></VTrack>
                  <Tri d="down" c="#a3a3a3" />
                </VScroll>
              </ConsoleArea>
              <HScroll>
                <Tri d="left" c="#a3a3a3" />
                <HTrack><HThumb /></HTrack>
                <Tri d="right" />
              </HScroll>
              <Drawer>
                <Bar>
                  <DrawerTabs>
                    <DrawerMenu><IconButton aria-label="More tools"><Dots c="#6e6e6e" /></IconButton></DrawerMenu>
                    <DrawerTab><button>Console</button></DrawerTab>
                    <DrawerTab $on><button>What's New</button><IconButton $w={8} aria-label="Close tab"><Cross c="#5a5a5a" /></IconButton></DrawerTab>
                  </DrawerTabs>
                  <EndGroup><IconButton aria-label="Close drawer"><Cross s={10} c="#6e6e6e" /></IconButton></EndGroup>
                </Bar>
                <NewsRow>
                  <News>Highlights from the Chrome 64 update</News>
                  <VScroll><Tri d="up" c="#a3a3a3" /><Tri d="down" /></VScroll>
                </NewsRow>
              </Drawer>
            </DevTools>
          </Content>
        </Browser>
      </Workspace>
    </Desktop>
  );
}
